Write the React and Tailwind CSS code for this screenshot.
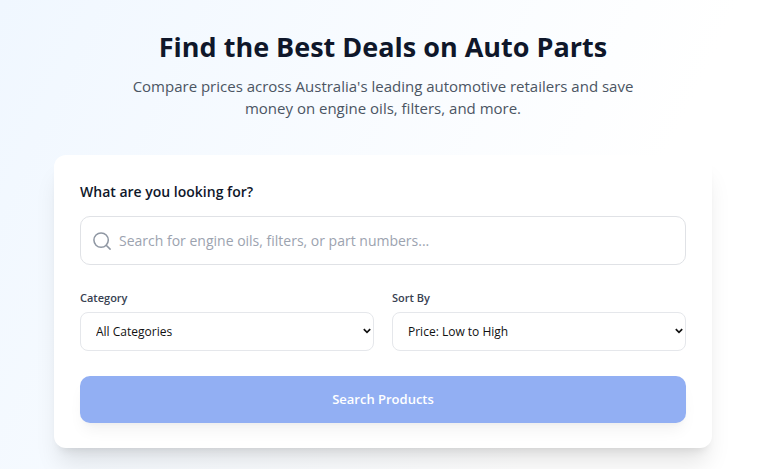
import { Search } from "lucide-react";

const categories = ["All Categories", "Engine Oils", "Filters", "Batteries"];
const sortOptions = ["Price: Low to High", "Price: High to Low", "Name"];

function SelectField({ id, label, options }) {
  return (
    <div className="flex flex-col gap-1">
      <label htmlFor={id} className="text-[11px] leading-5 font-semibold text-[#374151]">
        {label}
      </label>
      <div className="relative">
        <select
          id={id}
          className="h-[39px] w-full appearance-none rounded-lg border border-[#e5e7eb] bg-white px-[15px] text-[12px] text-[#111111]"
        >
          {options.map((option) => (
            <option key={option}>{option}</option>
          ))}
        </select>
        <svg
          className="pointer-events-none absolute top-4 right-[3px] h-[6px] w-2"
          viewBox="0 0 8 6"
          fill="none"
          stroke="#111111"
          strokeWidth="1.7"
          aria-hidden="true"
        >
          <path d="M0.8 1.2 4 4.4 7.2 1.2" />
        </svg>
      </div>
    </div>
  );
}

export default function App() {
  return (
    <main className="min-h-screen bg-[linear-gradient(115deg,#f0f7ff,#ffffff_75%)] pt-[27px] pr-14 pb-5 pl-[54px] font-['Open_Sans','Noto_Sans',sans-serif]">
      <header className="mx-auto mb-9 max-w-[520px] text-center">
        <h1 className="text-[27px] leading-10 font-bold text-[#0f172a]">
          Find the Best Deals on Auto Parts
        </h1>
        <p className="mt-2 text-[15px] leading-[22px] text-[#4b5563]">
          Compare prices across Australia's leading automotive retailers and save money on engine
          oils, filters, and more.
        </p>
      </header>
      <form
        className="mx-auto max-w-4xl rounded-xl bg-white px-[26px] py-[25px] shadow-xl"
        onSubmit={(event) => event.preventDefault()}
      >
        <label htmlFor="query" className="block text-[14px] leading-6 font-semibold text-[#0f172a]">
          What are you looking for?
        </label>
        <div className="mt-3 flex h-[49px] items-center gap-2 rounded-[10px] border border-[#e0e2e6] px-3">
          <Search className="size-[18px] shrink-0 text-[#8f97a3]" aria-hidden="true" viewBox="2 2 20 20" strokeWidth={1.7} />
          <input
            id="query"
            type="text"
            placeholder="Search for engine oils, filters, or part numbers..."
            className="w-full bg-transparent text-[14px] outline-none placeholder:text-[#9ca3af]"
          />
        </div>
        <div className="mt-[23px] grid grid-cols-2 gap-[18px]">
          <SelectField id="category" label="Category" options={categories} />
          <SelectField id="sort" label="Sort By" options={sortOptions} />
        </div>
        <button
          type="submit"
          className="mt-[25px] h-[47px] w-full rounded-[10px] bg-[#92aff3] text-[13px] font-semibold text-white shadow-lg shadow-black/5"
        >
          Search Products
        </button>
      </form>
    </main>
  );
}
